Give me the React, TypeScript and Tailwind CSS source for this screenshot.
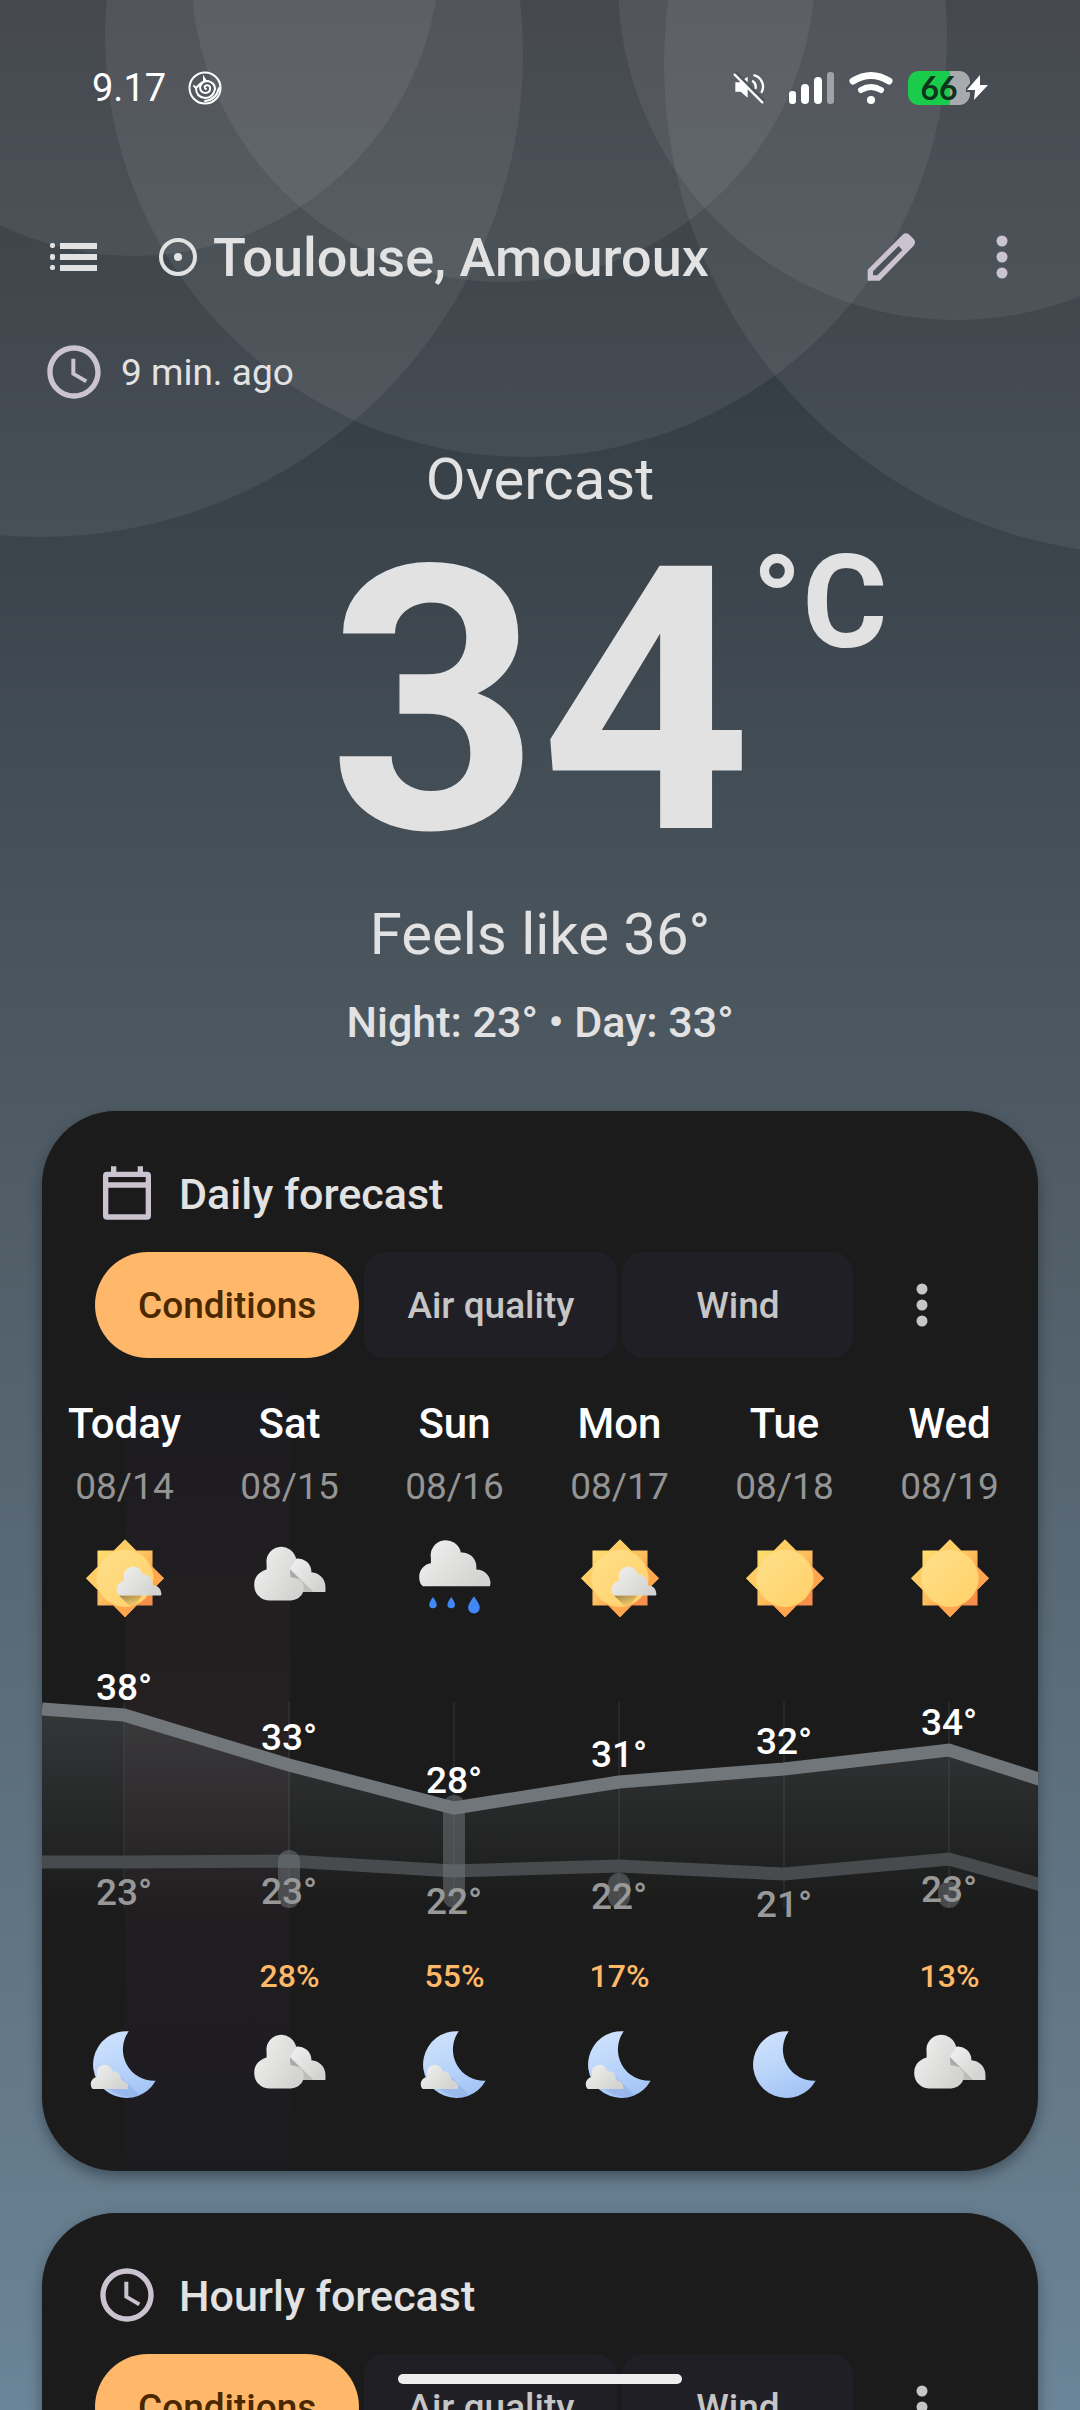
import { useState } from "react";
import type { ReactNode } from "react";
import { MdAccessTime } from "react-icons/md";

type DayIcon = "partly" | "cloudy" | "rain" | "sun";
type NightIcon = "partlyNight" | "cloudy" | "moon";

type Day = {
  name: string;
  date: string;
  icon: DayIcon;
  night: NightIcon;
  high: number;
  low: number;
  highY: number;
  lowY: number;
  rain?: number;
  rainY?: number;
};

const days: Day[] = [
  { name: "Today", date: "08/14", icon: "partly", night: "partlyNight", high: 38, low: 23, highY: 55, lowY: 202 },
  { name: "Sat", date: "08/15", icon: "cloudy", night: "cloudy", high: 33, low: 23, highY: 105, lowY: 201, rain: 28, rainY: 190 },
  { name: "Sun", date: "08/16", icon: "rain", night: "partlyNight", high: 28, low: 22, highY: 148, lowY: 211, rain: 55, rainY: 135 },
  { name: "Mon", date: "08/17", icon: "partly", night: "partlyNight", high: 31, low: 22, highY: 122, lowY: 206, rain: 17, rainY: 213 },
  { name: "Tue", date: "08/18", icon: "sun", night: "moon", high: 32, low: 21, highY: 109, lowY: 214 },
  { name: "Wed", date: "08/19", icon: "sun", night: "cloudy", high: 34, low: 23, highY: 90, lowY: 199, rain: 13, rainY: 221 },
];

const tabs = ["Conditions", "Air quality", "Wind"];

const CLOUD =
  "M29 146Q18 138 18 120A40 40 0 0 1 52 79L52 65A44 44 0 0 1 139 48A41 41 0 0 1 184 88L184 97A41 41 0 0 1 225 138Q225 146 221 146Z";

const Gradients = () => (
  <svg className="absolute size-0" aria-hidden="true">
    <defs>
      <linearGradient id="ray" x1="0" y1="0" x2="1" y2="1">
        <stop offset="0" stopColor="#ffe070" />
        <stop offset="0.5" stopColor="#fdbd5c" />
        <stop offset="0.85" stopColor="#f58f4a" />
      </linearGradient>
      <linearGradient id="diamond" x1="0.2" y1="0" x2="0.8" y2="1">
        <stop offset="0" stopColor="#ffdc6c" />
        <stop offset="0.45" stopColor="#fdc863" />
        <stop offset="0.75" stopColor="#ffa54f" />
      </linearGradient>
      <linearGradient id="disc" x1="0" y1="0" x2="1" y2="1">
        <stop offset="0" stopColor="#ffe08c" />
        <stop offset="1" stopColor="#ffd067" />
      </linearGradient>
      <linearGradient id="cloud" x1="0" y1="0" x2="1" y2="0.6">
        <stop offset="0" stopColor="#f2f2f2" />
        <stop offset="1" stopColor="#d3d3d1" />
      </linearGradient>
      <linearGradient id="moon" x1="0.2" y1="0" x2="0.6" y2="1">
        <stop offset="0" stopColor="#cfe2fd" />
        <stop offset="0.5" stopColor="#bcd6fa" />
        <stop offset="1" stopColor="#a3c4f6" />
      </linearGradient>
      <linearGradient id="shade" x1="0" y1="0" x2="0.7" y2="1">
        <stop offset="0" stopColor="#000" stopOpacity="0.4" />
        <stop offset="1" stopColor="#000" stopOpacity="0" />
      </linearGradient>
    </defs>
  </svg>
);

const WeatherIcon = ({ type }: { type: DayIcon | NightIcon }) => (
  <svg viewBox="0 0 244 244" className="size-[84px]" role="img" aria-label={type}>
    {(type === "sun" || type === "partly") && (
      <>
        <path d="M122 10L235 123L122 236L9 123Z" fill="url(#diamond)" />
        <path d="M42 42H202V202H42Z" fill="url(#ray)" />
        <path d="M122 10L154 42H90ZM9 123L42 90V156Z" fill="#ffcd65" />
        <path d="M235 123L202 90V156ZM122 236L154 202H90Z" fill="#ffa64f" />
        <circle cx="122" cy="123" r="83" fill="url(#disc)" />
      </>
    )}
    {type === "partly" && (
      <>
        <path d="M104 172H172L150 204Q140 206 132 200Z" fill="url(#shade)" />
        <g transform="translate(86 81) scale(0.63)">
          <path d={CLOUD} fill="url(#cloud)" />
        </g>
      </>
    )}
    {type === "cloudy" && (
      <>
        <path d="M118 163V80L139 66A39 39 0 0 1 184 100V105A43 43 0 0 1 225 148V163Z" fill="url(#cloud)" />
        <path d="M121 95L189 163H150L123 120Z" fill="#a9a9a7" />
        <path d="M145 119L189 163H160Z" fill="#bdbdbb" />
        <path
          d="M60 187A42 45 0 0 1 18 142Q18 108 54 97V82A43 43 0 0 1 140 68L121 95L123 120Q162 122 162 150A38 37 0 0 1 125 187Z"
          fill="url(#cloud)"
        />
      </>
    )}
    {type === "rain" && (
      <>
        <path d={CLOUD} fill="url(#cloud)" />
        <path
          d="M58 177Q69 192 69 199A11 11 0 0 1 47 199Q47 192 58 177ZM111 177Q122 192 122 199A11 11 0 0 1 100 199Q100 192 111 177ZM177 175Q194 198 194 208A17 17 0 0 1 160 208Q160 198 177 175Z"
          fill="#3f88f5"
        />
      </>
    )}
    {(type === "moon" || type === "partlyNight") && (
      <path d="M133 21A97 97 0 1 0 211 165A91 91 0 0 1 133 21Z" fill="url(#moon)" />
    )}
    {type === "partlyNight" && (
      <>
        <path d="M109 152L165 208Q120 222 76 189H128Z" fill="#7f9fd6" opacity="0.35" />
        <g transform="translate(13 112) scale(0.527)">
          <path d={CLOUD} fill="url(#cloud)" />
        </g>
      </>
    )}
  </svg>
);

const MoreIcon = () => (
  <svg viewBox="0 0 12 44" className="h-11 w-3" fill="currentColor">
    <circle cx="6" cy="6" r="5.5" />
    <circle cx="6" cy="22" r="5.5" />
    <circle cx="6" cy="38" r="5.5" />
  </svg>
);

const CalendarIcon = () => (
  <svg viewBox="0 0 24 24" className="size-16" fill="currentColor">
    <path
      fillRule="evenodd"
      d="M6 2H8V4H16V2H18V4H19.5A1.5 1.5 0 0 1 21 5.5V20.5A1.5 1.5 0 0 1 19.5 22H4.5A1.5 1.5 0 0 1 3 20.5V5.5A1.5 1.5 0 0 1 4.5 4H6ZM5 6V8H19V6ZM5 10V20H19V10Z"
    />
  </svg>
);

const StatusBar = () => (
  <div className="flex h-44 items-center justify-between pr-[90px] pl-[92px] text-white">
    <div className="flex items-center gap-[22px]">
      <span className="text-[38px] leading-[44px]">9.17</span>
      <svg viewBox="0 0 34 34" className="size-[34px]" fill="none" stroke="currentColor" strokeWidth="2" strokeLinecap="round">
        <circle cx="17" cy="17" r="15.5" />
        <path d="M18 18A2 2 0 0 1 17 15Q20 13 22 16Q23 21 18 22Q12 22 12 16Q14 10 20 10Q27 12 27 18Q25 27 17 27Q8 26 8 17" />
        <path d="M8 17L6 15M8 17L12 13L16 10V7L18 10" />
        <path d="M31 17Q28 29 17 30" />
      </svg>
    </div>
    <div className="flex items-center">
      <svg viewBox="92 70 96 96" className="size-8" fill="none" stroke="currentColor" strokeLinecap="round">
        <path d="M99 101H112L136 84V147L115 129H99Z" fill="currentColor" stroke="none" />
        <path d="M156 80A35 35 0 0 1 178 130M152 98Q162 106 160 118" strokeWidth="7" />
        <path d="M102 73L186 157" stroke="#4d5559" strokeWidth="8" />
        <path d="M97 78L180 161" strokeWidth="7" />
      </svg>
      <svg viewBox="0 0 46 34" className="ml-6 h-[34px] w-[46px]" fill="currentColor">
        <rect x="0" y="20" width="7" height="13" rx="3" />
        <rect x="12" y="13" width="8" height="20" rx="4" />
        <rect x="25" y="6" width="8" height="27" rx="4" />
        <rect x="38" y="1" width="7" height="32" rx="3" opacity="0.45" />
      </svg>
      <svg viewBox="0 0 44 34" className="ml-[14px] h-[34px] w-11" fill="none" stroke="currentColor" strokeWidth="7" strokeLinecap="round">
        <path d="M4 10Q22 -1 40 10" />
        <path d="M12 19Q22 13 32 19" strokeWidth="6" />
        <circle cx="22" cy="29" r="4" fill="currentColor" stroke="none" />
      </svg>
      <div className="ml-[15px] flex items-center">
        <span className="flex h-[34px] w-[62px] items-center justify-center rounded-[11px] bg-linear-to-r from-[#1acc4b] from-67% to-[#a7abad] to-67% font-[Lato,sans-serif] text-[32px] leading-[34px] font-bold text-[#10331b]">
          66
        </span>
        <svg viewBox="0 0 24 28" className="-ml-1 h-7 w-6" fill="#fff">
          <path d="M14 1L1 16H9L8 26L22 11H14Z" stroke="#474d54" strokeWidth="4" paintOrder="stroke" />
        </svg>
      </div>
    </div>
  </div>
);

const Backdrop = () => (
  <svg className="absolute top-0 left-0 h-[600px] w-full" viewBox="0 0 1080 600" preserveAspectRatio="xMidYMin slice" fill="#f8ffff" fillOpacity="0.065">
    <circle cx="134" cy="-50" r="306" />
    <circle cx="503" cy="-30" r="312" />
    <circle cx="956" cy="-18" r="338" />
    <circle cx="40" cy="54" r="483" />
    <circle cx="526" cy="36" r="421" />
    <circle cx="1154" cy="65" r="490" />
  </svg>
);

const columnX = (i: number) => 82 + i * 165;

const TemperatureChart = () => {
  const highs = ["0,49", ...days.map((d, i) => `${columnX(i)},${d.highY}`), "1000,120"].join(" ");
  const lows = ["0,202", ...days.map((d, i) => `${columnX(i)},${d.lowY}`), "1000,225"].join(" ");

  return (
    <svg viewBox="0 0 996 280" className="relative mt-10 w-full text-[37px] font-medium" textAnchor="middle">
      <defs>
        <linearGradient id="area" gradientUnits="userSpaceOnUse" x1="0" y1="45" x2="0" y2="248">
          <stop offset="0" stopColor="#70787c" stopOpacity="0.3" />
          <stop offset="1" stopColor="#70787c" stopOpacity="0" />
        </linearGradient>
      </defs>
      {days.map((d, i) => (
        <path key={d.name} d={`M${columnX(i)} 42V248`} stroke="#fff" strokeOpacity="0.06" strokeWidth="2" />
      ))}
      <polygon points={`0,248 ${highs} 1000,248`} fill="url(#area)" />
      <polyline points={lows} fill="none" stroke="#474b4d" strokeWidth="13" />
      {days.map(
        (d, i) =>
          d.rainY && (
            <rect
              key={d.name}
              x={columnX(i) - 11}
              y={d.rainY}
              width="22"
              height={248 - d.rainY}
              rx="11"
              fill="#747a7f"
              fillOpacity="0.5"
            />
          )
      )}
      <polyline points={highs} fill="none" stroke="#70767a" strokeWidth="13" />
      {days.map((d, i) => (
        <g key={d.name}>
          <text x={columnX(i)} y={d.highY - 15} fill="#fff">
            {d.high}°
          </text>
          <text x={columnX(i)} y={d.lowY + 43} fill="#989898">
            {d.low}°
          </text>
        </g>
      ))}
    </svg>
  );
};

const CardTabs = ({ label }: { label: string }) => {
  const [active, setActive] = useState<string>("Conditions");

  return (
    <div className="mt-[27px] flex gap-[5px] px-[53px]" role="tablist" aria-label={label}>
      {tabs.map((tab) => (
        <button
          key={tab}
          role="tab"
          aria-selected={active === tab}
          onClick={() => setActive(tab)}
          className={`h-[106px] min-w-[231px] shrink-0 whitespace-nowrap px-[43px] pt-[2px] text-[37px] leading-[44px] font-medium cursor-pointer ${
            active === tab
              ? "rounded-[53px] bg-[#ffb76a] text-[#4a2800]"
              : "rounded-[21px] bg-[#201f25] text-[#c6c6c6]"
          }`}
        >
          {tab}
        </button>
      ))}
      <button aria-label="More" className="flex w-32 items-center justify-center text-[#c6c6c6] cursor-pointer">
        <MoreIcon />
      </button>
    </div>
  );
};

const CardTitle = ({ icon, title }: { icon: ReactNode; title: string }) => (
  <div className="flex items-center gap-5 px-[53px] pt-[50px] text-[#cbc4d0]">
    {icon}
    <h2 className="pt-[2px] text-[43px] leading-[60px] font-medium text-[#e2e2e2]">{title}</h2>
  </div>
);

const App = () => {
  return (
    <div className="relative h-screen overflow-hidden bg-linear-to-b from-[#2a3036] via-[#4e5a63] via-46% to-[#6b8497] font-[Roboto,sans-serif] text-[#e2e2e2]">
      <Gradients />
      <Backdrop />
      <div className="relative">
        <StatusBar />
        <header className="flex h-[162px] items-center pr-[46px] pl-[49px]">
          <button aria-label="Locations" className="cursor-pointer">
            <svg viewBox="0 0 50 28" className="h-7 w-[50px]" fill="currentColor">
              <path d="M11 0H48V6H11ZM11 11H48V17H11ZM11 22H48V28H11Z" />
              <rect x="1" y="0" width="5" height="5" rx="2" />
              <rect x="1" y="11" width="5" height="6" rx="2" />
              <rect x="1" y="22" width="5" height="5" rx="2" />
            </svg>
          </button>
          <svg viewBox="0 0 38 38" className="ml-[60px] size-[38px]" fill="none" stroke="currentColor" strokeWidth="4">
            <circle cx="19" cy="19" r="17" />
            <circle cx="19" cy="19" r="4" fill="currentColor" stroke="none" />
          </svg>
          <h1 className="ml-4 flex-1 pt-[2px] text-[54px] leading-[64px] font-medium">Toulouse, Amouroux</h1>
          <button aria-label="Edit" className="text-[#cbc4d0] cursor-pointer">
            <svg viewBox="138 62 144 142" className="size-12" fill="currentColor">
              <path
                fillRule="evenodd"
                d="M140 204V171L245 66Q255 58 265 66L278 79Q286 88 278 99L176 204ZM156 176V188H169L244 112L233 100Z"
              />
            </svg>
          </button>
          <button aria-label="Menu" className="ml-[55px] flex w-16 justify-center text-[#cbc4d0] cursor-pointer">
            <MoreIcon />
          </button>
        </header>
        <div className="flex h-[67px] items-center gap-[15px] pl-[42px]">
          <MdAccessTime className="size-16 text-[#cbc4d0]" />
          <span className="pt-[2px] text-[37px] leading-[44px]">9 min. ago</span>
        </div>

        <section className="mt-10 flex flex-col items-center">
          <p className="text-[58px] leading-[68px]">Overcast</p>
          <p className="relative mt-[39px] text-[369px] leading-[300px] font-bold">
            34
            <span className="absolute -top-[14px] left-full text-[130px] leading-[130px]">°C</span>
          </p>
          <p className="mt-12 text-[58px] leading-[68px]">Feels like 36°</p>
          <p className="mt-[30px] text-[43px] leading-[48px] font-medium">Night: 23° • Day: 33°</p>
        </section>

        <main className="mt-[65px] flex flex-col gap-[42px] px-[42px]">
          <section className="overflow-hidden rounded-[74px] bg-[#1b1b1b] shadow-[0_6px_14px_rgba(0,0,0,0.35)]">
            <CardTitle icon={<CalendarIcon />} title="Daily forecast" />
            <CardTabs label="Daily forecast" />
            <div className="relative mt-8 pt-[10px] pb-[63px]">
              {/* tinted band between the first two days */}
              <div className="absolute top-0 bottom-0 left-[83px] w-[165px] bg-linear-to-b from-[#1c1b20] via-[#252021] via-42% to-[#1c1b20]" />
              <div className="relative grid grid-cols-6 pr-[6px]">
                {days.map((d) => (
                  <div key={d.name} className="flex flex-col items-center">
                    <h3 className="text-[42px] leading-[48px] font-medium text-white">{d.name}</h3>
                    <p className="mt-[17px] mb-[27px] text-[37px] leading-[44px] text-[#949494]">{d.date}</p>
                    <WeatherIcon type={d.icon} />
                  </div>
                ))}
              </div>
              <TemperatureChart />
              <div className="relative mt-4 grid grid-cols-6 pr-[6px]">
                {days.map((d) => (
                  <div key={d.name} className="flex flex-col items-center">
                    <p className="mb-7 h-10 text-[32px] leading-[40px] font-medium text-[#ffb868]">
                      {d.rain && `${d.rain}%`}
                    </p>
                    <WeatherIcon type={d.night} />
                  </div>
                ))}
              </div>
            </div>
          </section>

          <section className="overflow-hidden rounded-[74px] bg-[#1b1b1b] pb-[63px] shadow-[0_6px_14px_rgba(0,0,0,0.35)]">
            <CardTitle icon={<MdAccessTime className="size-16" />} title="Hourly forecast" />
            <CardTabs label="Hourly forecast" />
          </section>
        </main>
      </div>
      <div className="absolute bottom-[26px] left-1/2 h-[10px] w-[284px] -translate-x-1/2 rounded-full bg-[#eee]" />
    </div>
  );
};

export default App;
